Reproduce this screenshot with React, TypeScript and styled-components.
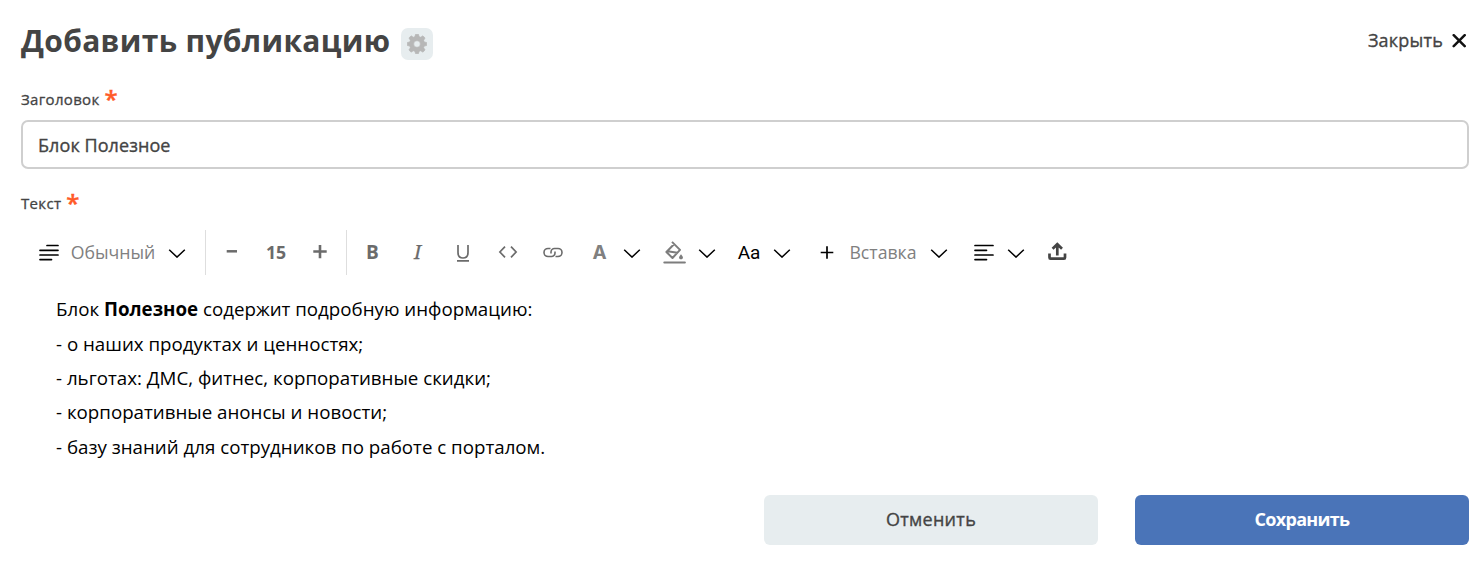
import React from 'react';
import styled, { createGlobalStyle } from 'styled-components';

const GlobalStyle = createGlobalStyle`
  * { box-sizing: border-box; }
  body { margin: 0; background: #fff; font-family: 'Open Sans', sans-serif; color: #444; }
  svg { display: block; flex: none; }
`;

const Dialog = styled.main`
  display: flex;
  flex-direction: column;
  height: 587px;
  padding: 22px 15px 0 21px;
`;
const Header = styled.header`
  display: flex;
  align-items: flex-start;
  height: 67px;
`;
const Title = styled.h1`
  margin: 0 11px 0 0;
  font-size: 30px;
  line-height: 38px;
  font-weight: 700;
  letter-spacing: 0.33px;
  white-space: nowrap;
`;
const SettingsButton = styled.button`
  display: flex;
  align-items: center;
  justify-content: center;
  width: 32px;
  height: 32px;
  margin-top: 6px;
  padding: 0;
  border: 0;
  border-radius: 7px;
  background: #e7edef;
`;
const CloseButton = styled.button`
  display: flex;
  align-items: center;
  gap: 9px;
  margin: 5px 3px 0 auto;
  padding: 0;
  border: 0;
  background: none;
  font: 400 18px/27px 'Open Sans', sans-serif;
  letter-spacing: 0.2px;
  -webkit-text-stroke: 0.35px #444;
  color: #444;
`;
const Label = styled.label`
  display: flex;
  gap: 5px;
  height: 20px;
  font-size: 15px;
  line-height: 20px;
  letter-spacing: 0.33px;
  -webkit-text-stroke: 0.3px #444;
`;
const Required = styled.span`
  font-size: 24px;
  line-height: 19px;
  font-weight: 600;
  letter-spacing: 0;
  -webkit-text-stroke: 0.4px #ff5a28;
  color: #ff5a28;
`;
const TitleInput = styled.input`
  width: 100%;
  height: 49px;
  margin: 11px 0 24px;
  padding: 0 15px;
  border: 2px solid #cfcfcf;
  border-radius: 7px;
  outline: 0;
  font: 400 18px 'Open Sans', sans-serif;
  letter-spacing: 0.08px;
  -webkit-text-stroke: 0.35px #444;
  color: #444;
`;
const Toolbar = styled.div`
  display: flex;
  align-items: flex-start;
  height: 45px;
  margin-top: 17px;
  padding-left: 14px;
`;
const Tool = styled.span<{ $w: number; $ml?: number }>`
  display: flex;
  align-items: center;
  justify-content: center;
  flex: none;
  width: ${p => p.$w}px;
  height: 44px;
  margin-left: ${p => p.$ml ?? 0}px;
  white-space: nowrap;
`;
const Divider = styled.i<{ $ml: number }>`
  width: 1px;
  height: 45px;
  margin-left: ${p => p.$ml}px;
  background: #dedede;
`;
const ToolText = styled.span<{ $bold?: boolean; $size?: number }>`
  font-size: ${p => p.$size ?? 17.7}px;
  line-height: 24px;
  font-weight: ${p => (p.$bold ? 700 : 400)};
  color: ${p => (p.$bold ? '#6b6b6b' : '#808080')};
`;
const Italic = styled.em`
  font: italic 400 19.5px/24px 'Noto Serif', 'DejaVu Serif', 'Liberation Serif', serif;
  -webkit-text-stroke: 0.25px #6b6b6b;
  color: #6b6b6b;
`;
const ColorLetter = styled.span`
  padding-top: 2px;
  font: 700 19px/24px Inter, sans-serif;
  color: #808080;
`;
const CaseText = styled.span`
  padding-top: 2px;
  font: 400 19px/24px Roboto, sans-serif;
  color: #000;
`;
const Editor = styled.article`
  height: 220px;
  padding: 17.2px 35px 0;
  font-size: 18.73px;
  line-height: 34.4px;
  color: #000;
`;
const Line = styled.p`
  margin: 0;
  white-space: nowrap;
`;
const Footer = styled.footer`
  display: flex;
  justify-content: flex-end;
  gap: 37px;
`;
const Action = styled.button<{ $primary?: boolean }>`
  width: 334px;
  height: 50px;
  padding: 0 0 2px;
  border: 0;
  border-radius: 6px;
  font: ${p => (p.$primary ? 700 : 400)} 18px 'Open Sans', sans-serif;
  letter-spacing: ${p => (p.$primary ? '-0.7px' : '0.3px')};
  -webkit-text-stroke: ${p => (p.$primary ? '0' : '0.35px #444')};
  background: ${p => (p.$primary ? '#4a74b8' : '#e7edef')};
  color: ${p => (p.$primary ? '#fff' : '#444')};
`;

const Chevron = () => (
  <svg width="18" height="12" viewBox="0 0 18 12" fill="none" stroke="#000" strokeWidth="1.5">
    <path d="M1.200 3.700 9 11.100 16.800 3.700" />
  </svg>
);
const Lines = ({ d }: { d: string }) => (
  <svg width="20" height="18" viewBox="0 0 20 18" fill="none" stroke="#000" strokeWidth="1.7" strokeLinecap="round">
    <path d={d} />
  </svg>
);
const Plus = ({ r, cy, width, color }: { r: number; cy: number; width: number; color: string }) => (
  <svg width="14" height="14" viewBox="0 0 14 14" stroke={color} strokeWidth={width}>
    <path d={`M${7 - r} ${cy}H${7 + r}M7 ${cy - r}V${cy + r}`} />
  </svg>
);
const Gear = () => (
  <svg width="20" height="20" viewBox="2 2 20 20" fill="#b7b7b7" stroke="#b7b7b7" strokeWidth=".6" strokeLinejoin="round">
    <path
      fillRule="evenodd"
      d="M10.500 2.300h3l.6 2.300 1.500.6 2.300-1.400 2.200 2.200-1.400 2.300.6 1.600 2.400.6v3l-2.400.6-.6 1.600 1.400 2.300-2.200 2.200-2.300-1.400-1.500.6-.6 2.300h-3l-.6-2.300-1.500-.6-2.300 1.400-2.200-2.200 1.400-2.300-.6-1.600-2.400-.6v-3l2.400-.6.6-1.600L3.900 6l2.200-2.200 2.300 1.400 1.500-.6zM12 8.700a3.300 3.300 0 1 0 0 6.600 3.300 3.300 0 0 0 0-6.600z"
    />
  </svg>
);

export default function App() {
  return (
    <>
      <GlobalStyle />
      <Dialog>
        <Header>
          <Title>Добавить публикацию</Title>
          <SettingsButton><Gear /></SettingsButton>
          <CloseButton>
            Закрыть
            <svg width="14" height="14" viewBox="0 0 14 14" stroke="#111" strokeWidth="2.5" strokeLinecap="round">
              <path d="M1.700 1.200 12.700 12.200M12.700 1.200 1.700 12.200" />
            </svg>
          </CloseButton>
        </Header>

        <Label>Заголовок <Required>*</Required></Label>
        <TitleInput defaultValue="Блок Полезное" />
        <Label>Текст <Required>*</Required></Label>

        <Toolbar>
          <Tool $w={27}><Lines d="M8 2.500H19M1 7.300H19M1 12H19M1 16.600H12.500" /></Tool>
          <Tool $w={102}><ToolText>Обычный</ToolText></Tool>
          <Tool $w={26}><Chevron /></Tool>
          <Divider $ml={15} />
          <Tool $w={44} $ml={4}>
            <svg width="12" height="14" viewBox="0 0 12 14" stroke="#6b6b6b" strokeWidth="2.500"><path d="M.7 6.300H11" /></svg>
          </Tool>
          <Tool $w={44}><ToolText $bold>15</ToolText></Tool>
          <Tool $w={44}><Plus r={6.7} cy={6.5} width={2.6} color="#6b6b6b" /></Tool>
          <Divider $ml={4} />
          <Tool $w={45} $ml={3}><ToolText $bold $size={19}>B</ToolText></Tool>
          <Tool $w={45}><Italic>I</Italic></Tool>
          <Tool $w={45}>
            <svg width="14" height="20" viewBox="0 0 14 20" fill="none" stroke="#6b6b6b" strokeWidth="1.700">
              <path d="M2 3V10.500Q2 16 7 16T12 10.500V3M1 18.800H13" />
            </svg>
          </Tool>
          <Tool $w={45}>
            <svg width="20" height="12" viewBox="0 0 20 12" fill="none" stroke="#6b6b6b" strokeWidth="1.700">
              <path d="M7 .7 1.900 6 7 11.300M13 .7 18.100 6 13 11.300" />
            </svg>
          </Tool>
          <Tool $w={45}>
            <svg width="20" height="12" viewBox="0 0 20 12" fill="none" stroke="#6b6b6b" strokeWidth="1.600">
              <path d="M7.500 2.500H5A4 4 0 0 0 5 10.500H8.500A3.500 3.500 0 0 0 12 7V5.500M12.500 10.500H15A4 4 0 0 0 15 2.500H11.500A3.500 3.500 0 0 0 8 6V7.500" />
            </svg>
          </Tool>
          <Tool $w={33} $ml={8}><ColorLetter>A</ColorLetter></Tool>
          <Tool $w={32}><Chevron /></Tool>
          <Tool $w={42} $ml={5}>
            <svg width="24" height="24" viewBox="0 0 24 24" fill="none" stroke="#7d7d7d" strokeWidth="2">
              <path d="M10 1.900 18 9.900 10.500 18 4.400 12 12 4.300M5.500 11.200 15.500 12.700" strokeLinejoin="round" />
              <path d="M19 14.200q2.700 3 1.700 4.300-1.700 1.700-3.400 0-1-1.300 1.700-4.300z" fill="#7d7d7d" stroke="none" />
              <path d="M2.300 22.400H22.900" strokeLinecap="round" />
            </svg>
          </Tool>
          <Tool $w={22} $ml={1}><Chevron /></Tool>
          <Tool $w={40} $ml={11}><CaseText>Aa</CaseText></Tool>
          <Tool $w={26}><Chevron /></Tool>
          <Tool $w={22} $ml={21}><Plus r={6.3} cy={7.5} width={1.7} color="#000" /></Tool>
          <Tool $w={88} $ml={1}><ToolText>Вставка</ToolText></Tool>
          <Tool $w={24}><Chevron /></Tool>
          <Tool $w={25} $ml={20}><Lines d="M1 2.500H19M1 7.300H12.500M1 12H19M1 16.600H12.500" /></Tool>
          <Tool $w={24} $ml={8}><Chevron /></Tool>
          <Tool $w={26} $ml={16}>
            <svg width="20" height="20" viewBox="0 0 20 20" fill="none" stroke="#444" strokeWidth="2.700">
              <path d="M10.300 13.500V2.500M5.600 6.800 10.300 2.200 15 6.800M2.500 11.500V15.500Q2.500 16.700 3.500 16.700H17Q18 16.700 18 15.500V11.500" />
            </svg>
          </Tool>
        </Toolbar>

        <Editor>
          <Line>Блок <b>Полезное</b> содержит подробную информацию:</Line>
          <Line>- о наших продуктах и ценностях;</Line>
          <Line>- льготах: ДМС, фитнес, корпоративные скидки;</Line>
          <Line>- корпоративные анонсы и новости;</Line>
          <Line>- базу знаний для сотрудников по работе с порталом.</Line>
        </Editor>

        <Footer>
          <Action>Отменить</Action>
          <Action $primary>Сохранить</Action>
        </Footer>
      </Dialog>
    </>
  );
}
